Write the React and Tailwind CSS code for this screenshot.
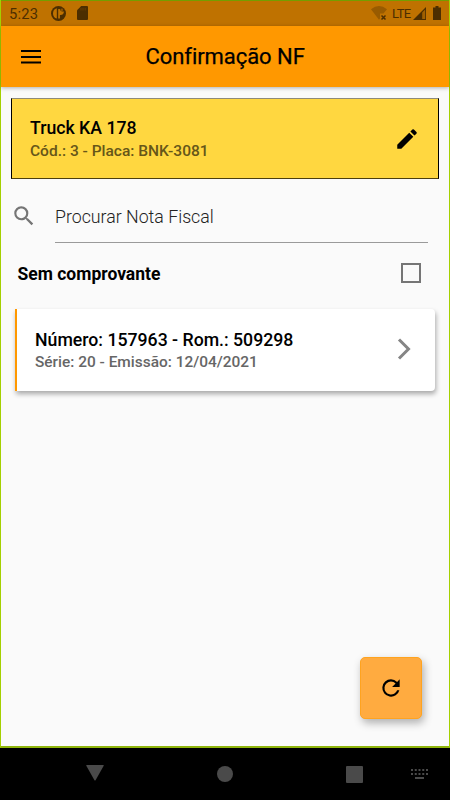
function Icon({ d, className }) {
  return (
    <svg viewBox="0 0 24 24" fill="currentColor" className={'shrink-0 ' + className}>
      <path d={d} />
    </svg>
  );
}

const icons = {
  edit: 'M3 17.25V21h3.75L17.81 9.94l-3.75-3.75L3 17.25zM20.71 7.04a1 1 0 0 0 0-1.41l-2.34-2.34a1 1 0 0 0-1.41 0l-1.83 1.83 3.75 3.75 1.83-1.83z',
  search:
    'M15.5 14h-.79l-.28-.27A6.47 6.47 0 0 0 16 9.5 6.5 6.5 0 1 0 9.5 16c1.61 0 3.09-.59 4.23-1.57l.27.28v.79l5 4.99L20.49 19l-4.99-5zm-6 0C7.01 14 5 11.99 5 9.5S7.01 5 9.5 5 14 7.01 14 9.5 11.99 14 9.5 14z',
  refresh:
    'M17.65 6.35A7.96 7.96 0 0 0 12 4a8 8 0 1 0 7.73 10h-2.08A6 6 0 1 1 12 6c1.66 0 3.14.69 4.22 1.78L13 11h7V4l-2.35 2.35z',
};

function StatusBar() {
  return (
    <div className="flex h-[26px] items-center bg-[#bf7200] pl-[8px] pr-[8px] text-[#4c2e00]">
      <span className="w-[42px] pt-[2px] text-[14.7px] leading-[26px] tracking-[0.2px]">5:23</span>
      <svg viewBox="0 0 15 15" className="mt-px h-[15px] w-[15px]">
        <circle cx="7.5" cy="7.5" r="7.5" fill="currentColor" />
        <path d="M5.8 2.2C3.2 2.6 2 5 2 7.4c0 2.5 1.3 4.5 3.8 5.1z" fill="#bf7200" />
        <path d="M7.2 3h1.6c.3 1.6 1.3 2.4 2.6 2.4h1.5c0 2.3-1.5 3.6-3.4 3.6h-.6v3.5H7.2z" fill="#bf7200" />
        <circle cx="10.8" cy="3.8" r="1.4" fill="#8a5300" />
      </svg>
      <svg viewBox="0 0 11 14" className="ml-[11px] h-[14px] w-[11px]" fill="currentColor">
        <path d="M4.2 0H10q1 0 1 1v12q0 1-1 1H1q-1 0-1-1V4.2z" />
        <path d="M4 2v2.5M6 2v2.5M8.2 2v2.5" stroke="#704300" strokeWidth=".8" />
      </svg>
      <svg viewBox="0 0 16 15" className="ml-auto mt-px h-[15px] w-[16px]">
        <path d="M0 3.2Q8-3.2 16 3.2L12.5 7.5H9v5L8 13.8z" fill="#985b00" />
        <path d="m10.5 9.5 4 4m0-4-4 4" stroke="currentColor" strokeWidth="1.5" />
      </svg>
      <span className="ml-[5px] w-[21px] pt-px text-[13px] leading-[26px] tracking-[-0.6px]">LTE</span>
      <svg viewBox="0 0 13 13" className="mt-px h-[13px] w-[13px]">
        <path d="M0 13 13 0v13z" fill="currentColor" />
        <path d="M9.2 5.5 12.2 2.5V12h-3z" fill="#a06000" />
      </svg>
      <svg viewBox="0 0 8 14" className="ml-[7px] h-[14px] w-[8px]" fill="currentColor">
        <path d="M2.5 0h3v1.5H8V14H0V1.5h2.5z" />
      </svg>
    </div>
  );
}

function AppBar() {
  return (
    <header className="relative z-10 flex h-[61px] items-center bg-[#ff9800] pl-[16px] shadow-[0_1px_4px_rgba(0,0,0,0.3)]">
      <svg viewBox="0 0 27 27" className="h-[27px] w-[27px]" stroke="currentColor" strokeWidth="2">
        <path d="M4 8h20M4 14h20M4 19.5h20" />
      </svg>
      <h1 className="ml-[101.5px] whitespace-nowrap pt-px text-[22px] font-normal leading-[28px] tracking-[-0.06px] [-webkit-text-stroke:0.25px_black]">
        Confirmação NF
      </h1>
    </header>
  );
}

function VehicleCard() {
  return (
    <section className="mx-[10px] mt-[11px] flex h-[81px] items-center justify-between border border-[#000] border-t-[#8f8a79] border-b-[#4c400f] bg-[#ffd740] pl-[18px] pr-[18px]">
      <div className="whitespace-nowrap pt-px">
        <p className="text-[17.7px] font-medium leading-[24px]">Truck KA 178</p>
        <p className="text-[15.5px] font-medium leading-[22px] text-[#665619]">Cód.: 3 - Placa: BNK-3081</p>
      </div>
      <Icon d={icons.edit} className="h-[26px] w-[26px]" />
    </section>
  );
}

function SearchField() {
  return (
    <div className="flex h-[64px] pl-[10px] pr-[21px]">
      <Icon d={icons.search} className="mt-[24px] h-[26px] w-[26px] text-[#757575]" />
      <div className="ml-[18px] flex-1 border-b border-[#9a9a9a]">
        <p className="mt-[27px] text-[17.75px] font-light leading-[22px] text-[#222]">Procurar Nota Fiscal</p>
      </div>
    </div>
  );
}

function InvoiceCard() {
  return (
    <article className="mx-[14px] flex h-[82px] items-center justify-between rounded-r-[4px] border-l-2 border-[#ff9800] bg-white pl-[18px] pr-[23px] shadow-[1px_3px_5px_rgba(0,0,0,0.33)]">
      <div className="whitespace-nowrap pt-[2px]">
        <p className="text-[17.7px] font-medium leading-[24px]">Número: 157963 - Rom.: 509298</p>
        <p className="text-[15.45px] font-medium leading-[21px] text-[#666]">Série: 20 - Emissão: 12/04/2021</p>
      </div>
      <svg viewBox="0 0 15 22" className="mb-px h-[22px] w-[15px]" fill="none" stroke="#858585" strokeWidth="3">
        <path d="m2 1.5 9.5 9.5L2 20.5" />
      </svg>
    </article>
  );
}

function NavigationBar() {
  return (
    <nav className="flex h-[52px] items-center bg-black text-[#4a4a4a]">
      <svg viewBox="0 0 18 16" className="mb-[2px] ml-[86px] h-[16px] w-[18px]" fill="currentColor">
        <path d="M.8 0h16.4q.8 0 .5.8L9.7 15q-.7 1-1.4 0L.3.8Q0 0 .8 0z" />
      </svg>
      <span className="ml-[113px] h-[16px] w-[16px] rounded-full bg-[#4a4a4a]" />
      <span className="ml-[113px] h-[17px] w-[17px] rounded-[1px] bg-[#4a4a4a]" />
      <svg viewBox="0 0 17 10" className="ml-[48px] h-[10px] w-[17px]" stroke="currentColor" strokeWidth="2">
        <path d="M0 1h17M0 5h17" strokeDasharray="2 1.75" />
        <path d="M4 9h9" />
      </svg>
    </nav>
  );
}

export default function App() {
  return (
    <div className="h-[800px] w-[450px] overflow-hidden bg-black font-[Roboto,sans-serif] text-black">
      <div className="relative h-[748px] border-x border-b-2 border-[#a4d000] border-b-[#8fb50c] bg-[#fafafa]">
        <div className="pointer-events-none absolute inset-x-0 top-0 z-20 h-px bg-[#749d00]" />
        <StatusBar />
        <AppBar />
        <VehicleCard />
        <SearchField />
        <div className="flex h-[65.5px] items-center justify-between pl-[16.5px] pr-[28.5px]">
          <span className="mb-[4px] text-[17.5px] font-bold leading-[24px]">Sem comprovante</span>
          <span className="mb-[5px] h-[20px] w-[20px] border-2 border-[#757575]" />
        </div>
        <InvoiceCard />
        <button
          aria-label="Atualizar"
          className="absolute bottom-[27px] right-[27px] flex h-[62px] w-[62px] items-center justify-center rounded-[5px] border border-[#ffa31f] bg-[#ffab40] shadow-[2px_4px_8px_rgba(0,0,0,0.3)]"
        >
          <Icon d={icons.refresh} className="h-[26px] w-[26px]" />
        </button>
      </div>
      <NavigationBar />
    </div>
  );
}
